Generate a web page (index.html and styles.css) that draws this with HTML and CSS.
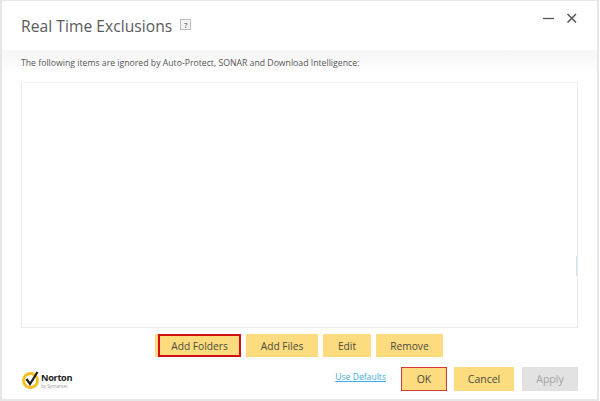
FILE: index.html
```html
<!DOCTYPE html>
<html lang="en">
<head>
<meta charset="utf-8">
<title>Real Time Exclusions</title>
<link rel="stylesheet" href="styles.css">
</head>
<body>
<div class="window">
  <header class="header">
    <h1 class="title">Real Time Exclusions</h1>
    <span class="help">?</span>
    <div class="controls">
      <svg class="min" width="12" height="12" viewBox="0 0 12 12"><path d="M0 6.5H11" stroke="#555" stroke-width="1.3"/></svg>
      <svg class="close" width="12" height="12" viewBox="0 0 12 12"><path d="M1.5 2L10 10.5M10 2L1.5 10.5" stroke="#555" stroke-width="1.5"/></svg>
    </div>
  </header>
  <div class="band">The following items are ignored by Auto-Protect, SONAR and Download Intelligence:</div>
  <div class="list"><span class="thumb"></span></div>
  <div class="actions">
    <button class="btn focus-thick w-folders">Add Folders</button>
    <button class="btn w-files">Add Files</button>
    <button class="btn w-edit">Edit</button>
    <button class="btn w-remove">Remove</button>
  </div>
  <footer class="footer">
    <div class="logo">
      <svg width="20" height="20" viewBox="0 0 20 20">
        <circle cx="9.5" cy="10.5" r="7" fill="none" stroke="#f5bf1f" stroke-width="3"/>
        <path d="M5.5 9L9 14L16.5 2" fill="none" stroke="#1c1c1c" stroke-width="2.2"/>
      </svg>
      <div class="brand">
        <span class="brand-name">Norton</span>
        <span class="brand-sub">by Symantec</span>
      </div>
    </div>
    <a class="link" href="#">Use Defaults</a>
    <button class="btn tall focus-thin w-ok">OK</button>
    <button class="btn tall w-cancel">Cancel</button>
    <button class="btn tall disabled w-apply">Apply</button>
  </footer>
</div>
</body>
</html>
```
FILE: styles.css
```css
* { box-sizing: border-box; }
html, body { margin: 0; height: 100%; background: #fff; }
body { font-family: "Open Sans", "Noto Sans", sans-serif; color: #444; overflow: hidden; }
.window {
  width: 599px; height: 401px;
  border: 1px solid #e6e6e6; border-width: 1px 2px 2px 2px;
  display: flex; flex-direction: column;
  background: #fff;
}
.header { height: 49px; display: flex; align-items: flex-start; padding: 14px 0 0 19px; position: relative; }
.title { margin: 0; font-size: 15.6px; line-height: 22px; font-weight: 400; color: #5a5a5a; letter-spacing: 0.05px; }
.help {
  margin: 4px 0 0 8px; width: 11px; height: 11px;
  border: 1px solid #bbb; background: #f4f4f4;
  font-size: 8px; line-height: 9px; text-align: center; color: #444;
}
.controls { margin-left: auto; margin-right: 19px; margin-top: -3px; display: flex; gap: 11px; align-items: center; }
.band {
  height: 22px; padding: 6px 0 0 19px;
  background: linear-gradient(#f6f6f6, #fbfbfb 70%, #fff);
  font-size: 8.7px; line-height: 14px; color: #555;
}
.list {
  margin: 10px 19px 0 19px; height: 246px;
  border: 1px solid #e8ecec; border-top-color: #f4f4f4;
  background: #fff; position: relative;
}
.thumb { position: absolute; right: 0; top: 173px; width: 1px; height: 20px; background: #cfe2ee; }
.actions { display: flex; justify-content: center; gap: 5px; margin-top: 6px; height: 23px; padding-left: 2px; }
.btn {
  font: inherit; font-size: 10.2px; color: #4a4a3c;
  background: #fddc80; border: 0; padding: 0; height: 23px;
}
.focus-thick { outline: 2px solid #d40f14; outline-offset: -2px; box-shadow: -3px 0 0 #fddc80; }
.focus-thin { border: 1px solid #d9383a; }
.w-folders { width: 83px; }
.w-files { width: 72px; }
.w-edit { width: 48px; }
.w-remove { width: 67px; }
.footer { display: flex; align-items: flex-start; margin-top: 10px; padding: 0 19px; }
.logo { display: flex; align-items: center; gap: 0; margin-top: 3px; }
.brand { display: flex; flex-direction: column; }
.brand-name { font-size: 9.2px; line-height: 11px; font-weight: 700; color: #222; letter-spacing: -0.3px; }
.brand-sub { font-size: 4.6px; line-height: 6px; color: #999; }
.link { margin-left: auto; margin-right: 15px; margin-top: 2px; font-size: 8.6px; line-height: 16px; color: #3fa9dc; }
.btn.tall { height: 24px; font-size: 10.5px; }
.w-ok { width: 46px; margin-right: 7px; }
.w-cancel { width: 60px; margin-right: 8px; }
.w-apply { width: 56px; }
.disabled { background: #e2e2e2; color: #a3a3a3; }
```
